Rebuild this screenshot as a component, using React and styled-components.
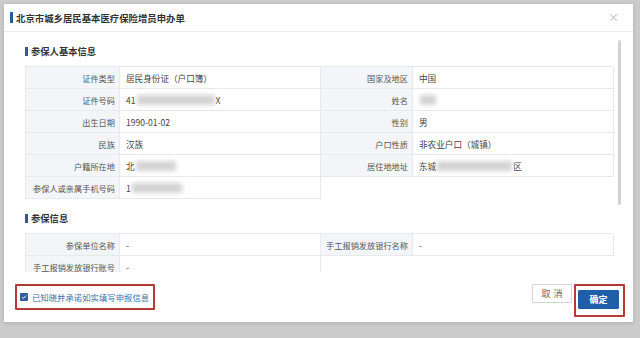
import { Fragment } from 'react';
import styled, { createGlobalStyle } from 'styled-components';

const Global = createGlobalStyle`
    html, body {
        margin: 0;
        padding: 0;
        width: 640px;
        height: 338px;
        overflow: hidden;
        background: #cbcbcb;
        font-family: "Noto Sans CJK SC", "Noto Sans", sans-serif;
    }
`;

const Page = styled.div`
    width: 640px;
    height: 338px;
    padding: 4px 7px 0 4px;
    box-sizing: border-box;
    position: relative;
`;

const Faint = styled.span`
    position: absolute;
    left: ${props => props.x}px;
    top: ${props => props.y}px;
    font-size: 9px;
    color: #a9a9a9;
`;

const Modal = styled.div`
    position: relative;
    width: 629px;
    height: 318px;
    background: #fff;
    display: flex;
    flex-direction: column;
    box-shadow: 0 1px 4px rgba(0, 0, 0, 0.15);
`;

const Header = styled.div`
    height: 27px;
    flex: none;
    display: flex;
    align-items: center;
    padding: 0 14px 0 6px;
    border-bottom: 1px solid #ececec;
`;

const Bar = styled.span`
    display: inline-block;
    width: 3px;
    height: ${props => props.h || 10}px;
    background: #2b5c98;
    margin-right: 3px;
`;

const Title = styled.div`
    flex: 1;
    display: flex;
    align-items: center;
    font-size: 9.4px;
    font-weight: 600;
    color: #333;
`;

const Close = styled.span`
    font-size: 11px;
    color: #b5b5b5;
    line-height: 1;
`;

const Body = styled.div`
    flex: 1;
    position: relative;
    overflow: hidden;
    padding: 0 20px 0 21px;
`;

const Scroll = styled.div`
    position: absolute;
    right: 12px;
    top: 8px;
    width: 3px;
    height: 165px;
    border-radius: 2px;
    background: #d2d2d2;
`;

const SectionTitle = styled.div`
    display: flex;
    align-items: center;
    height: 14px;
    margin: 12px 0 8px;
    font-size: 9.3px;
    font-weight: 600;
    color: #333;
`;

const Table = styled.div`
    display: grid;
    grid-template-columns: 94px 201px 92px 201px;
    grid-auto-rows: 22px;
    border-top: 1px solid #e6e9ee;
    border-left: 1px solid #e6e9ee;
`;

const Label = styled.div`
    display: flex;
    align-items: center;
    justify-content: flex-end;
    padding-right: 4px;
    background: #f3f5f8;
    font-size: 8.2px;
    color: #555;
    white-space: nowrap;
    border-right: 1px solid #e6e9ee;
    border-bottom: 1px solid #e6e9ee;
`;

const Value = styled.div`
    display: flex;
    align-items: center;
    padding-left: 6px;
    font-size: 8.6px;
    color: #444;
    white-space: nowrap;
    border-right: 1px solid #e6e9ee;
    border-bottom: 1px solid #e6e9ee;
`;

const Empty = styled.div`
    grid-column: span 2;
    background: #fff;
    margin: 0 -1px -1px 0;
`;

const Blur = styled.span`
    display: inline-block;
    width: ${props => props.w}px;
    height: 10px;
    margin: 0 1px;
    background: #d4d4d4;
    filter: blur(2px);
`;

const Footer = styled.div`
    height: 50px;
    flex: none;
    display: flex;
    align-items: center;
    justify-content: space-between;
    padding: 0 8px 0 11px;
`;

const Marked = styled.div`
    display: flex;
    align-items: center;
    gap: 4px;
    padding: ${props => props.pad};
    border: 2px solid #b53a37;
    border-radius: 1px;
`;

const Check = styled.span`
    width: 8px;
    height: 8px;
    background: #2c5f9e;
    border-radius: 1px;
    display: flex;
    align-items: center;
    justify-content: center;
`;

const Agree = styled.span`
    font-size: 8.4px;
    color: #3b6fa6;
`;

const Actions = styled.div`
    display: flex;
    align-items: flex-start;
    gap: 2px;
    margin-top: 6px;
`;

const Button = styled.button`
    width: ${props => props.w}px;
    height: 19px;
    padding: 0;
    font-family: inherit;
    font-size: 9px;
    letter-spacing: ${props => (props.primary ? '0' : '3px')};
    text-indent: ${props => (props.primary ? '0' : '3px')};
    font-weight: ${props => (props.primary ? 700 : 400)};
    color: ${props => (props.primary ? '#fff' : '#666')};
    background: ${props => (props.primary ? '#1f5faa' : '#fff')};
    border: 1px solid ${props => (props.primary ? '#1f5faa' : '#d6d6d6')};
    border-radius: 1px;
`;

const rows1 = [
    ['证件类型', '居民身份证（户口簿）', '国家及地区', '中国'],
    ['证件号码', <>41<Blur w={78} />X</>, '姓名', <Blur w={16} />],
    ['出生日期', '1990-01-02', '性别', '男'],
    ['民族', '汉族', '户口性质', '非农业户口（城镇）'],
    ['户籍所在地', <>北<Blur w={40} /></>, '居住地地址', <>东城<Blur w={75} />区</>],
];

const App = () => (
    <Page>
        <Global />
        <Faint x={624} y={88}>号</Faint>
        <Faint x={624} y={140}>可</Faint>
        <Faint x={624} y={270}>号</Faint>
        <Modal>
            <Header>
                <Title><Bar h={11} />北京市城乡居民基本医疗保险增员申办单</Title>
                <Close>×</Close>
            </Header>
            <Body>
                <Scroll />
                <SectionTitle><Bar h={9} />参保人基本信息</SectionTitle>
                <Table>
                    {rows1.map((r, i) => (
                        <Fragment key={i}>
                            <Label>{r[0]}</Label>
                            <Value>{r[1]}</Value>
                            <Label>{r[2]}</Label>
                            <Value>{r[3]}</Value>
                        </Fragment>
                    ))}
                    <Label>参保人或亲属手机号码</Label>
                    <Value>1<Blur w={50} /></Value>
                    <Empty />
                </Table>
                <SectionTitle><Bar h={9} />参保信息</SectionTitle>
                <Table>
                    <Label>参保单位名称</Label>
                    <Value>-</Value>
                    <Label>手工报销发放银行名称</Label>
                    <Value>-</Value>
                    <Label>手工报销发放银行账号</Label>
                    <Value>-</Value>
                    <Empty />
                </Table>
            </Body>
            <Footer>
                <Marked pad="5px 4px 5px 3px">
                    <Check>
                        <svg width="6" height="6" viewBox="0 0 6 6">
                            <path d="M1 3.1 L2.4 4.4 L5 1.6" stroke="#fff" strokeWidth="1" fill="none" />
                        </svg>
                    </Check>
                    <Agree>已知晓并承诺如实填写申报信息</Agree>
                </Marked>
                <Actions>
                    <Button w={40}>取消</Button>
                    <Marked pad="4px 4px 6px 2px">
                        <Button primary w={41}>确定</Button>
                    </Marked>
                </Actions>
            </Footer>
        </Modal>
    </Page>
);

export default App;
